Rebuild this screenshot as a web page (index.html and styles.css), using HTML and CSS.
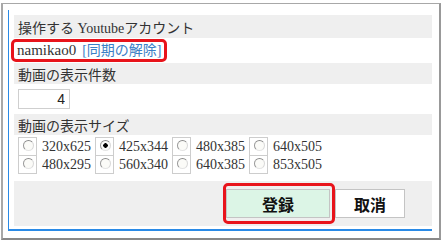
FILE: index.html
```html
<!DOCTYPE html>
<html lang="ja">
<head>
    <meta charset="UTF-8">
    <meta name="viewport" content="width=device-width, initial-scale=1.0">
    <title>Youtube設定</title>
    <link rel="stylesheet" href="styles.css">
</head>
<body>
    <div class="dialog">
        <div class="panel">
            <div class="row head">操作する Youtubeアカウント</div>
            <div class="row account">
                <span class="mark"><span class="user">namikao0</span><a class="link" href="#">[同期の解除]</a></span>
            </div>
            <div class="row head">動画の表示件数</div>
            <div class="row count">
                <input class="num" type="text" value="4">
            </div>
            <div class="row head">動画の表示サイズ</div>
            <div class="row sizes">
                <table class="size-table">
                    <tr>
                        <td class="pick"><input type="radio" name="size"></td>
                        <td class="size">320x625</td>
                        <td class="pick"><input type="radio" name="size" checked></td>
                        <td class="size">425x344</td>
                        <td class="pick"><input type="radio" name="size"></td>
                        <td class="size">480x385</td>
                        <td class="pick"><input type="radio" name="size"></td>
                        <td class="size">640x505</td>
                    </tr>
                    <tr>
                        <td class="pick"><input type="radio" name="size"></td>
                        <td class="size">480x295</td>
                        <td class="pick"><input type="radio" name="size"></td>
                        <td class="size">560x340</td>
                        <td class="pick"><input type="radio" name="size"></td>
                        <td class="size">640x385</td>
                        <td class="pick"><input type="radio" name="size"></td>
                        <td class="size">853x505</td>
                    </tr>
                </table>
            </div>
            <div class="row actions">
                <span class="mark mark-btn"><button class="btn primary">登録</button></span>
                <button class="btn">取消</button>
            </div>
        </div>
    </div>
</body>
</html>
```

FILE: styles.css
```css
body {
    margin: 0;
    background-color: #ffffff;
    font-family: 'Liberation Serif', 'Noto Sans CJK JP', serif;
    font-size: 14px;
    color: #333;
}
.dialog {
    width: 440px;
    height: 237px;
    margin: 3px 0 0 1px;
    border: 1px solid #a8a8a8;
    border-left-width: 2px;
    border-right: 2px solid #999;
    border-bottom: 2px solid #888;
    padding: 6px 7px 0 5px;
    box-sizing: border-box;
}
.panel {
    border-left: 1px solid #2a8ae6;
    border-bottom: 2px solid #2a8ae6;
    padding: 5px 0 3px 5px;
}
.row {
    display: flex;
    align-items: center;
    padding-left: 4px;
}
.head {
    background-color: #efefef;
    height: 21px;
}
.head:first-child {
    height: 23px;
}
.account {
    height: 25px;
}
.mark {
    display: inline-block;
    border: 3px solid #e8141b;
    border-radius: 5px;
    margin-left: -7px;
    padding: 0 3px 0 3px;
    line-height: 16px;
}
.user {
    font-size: 15px;
}
.link {
    color: #3b80c6;
    text-decoration: none;
    margin-left: 6px;
}
.count {
    height: 30px;
}
.num {
    width: 52px;
    height: 20px;
    box-sizing: border-box;
    border: 1px solid #cfcfcf;
    padding: 0 4px;
    text-align: right;
    font-family: 'Liberation Sans', sans-serif;
    font-size: 14px;
    color: #222;
}
.sizes {
    height: 46px;
    align-items: flex-start;
    padding-top: 2px;
    box-sizing: border-box;
}
.size-table {
    border-collapse: collapse;
}
.size-table td {
    height: 17px;
    padding: 0;
}
.pick {
    width: 17px;
    border: 1px solid #cdcdcd;
    vertical-align: top;
}
.size {
    padding: 0 4px 0 5px !important;
    line-height: 17px;
}
.pick input {
    appearance: none;
    width: 11px;
    height: 11px;
    margin: 2px 0 0 4px;
    border-radius: 50%;
    border: 1px solid;
    border-color: #8a8a8a #d8d8d8 #e4e4e4 #9a9a9a;
    background: #fbfbf8;
    display: block;
}
.pick input:checked {
    background: radial-gradient(circle, #000 0, #000 2px, #fbfbf8 2.5px);
}
.actions {
    background-color: #efefef;
    height: 45px;
    justify-content: flex-end;
    padding-right: 27px;
}
.mark-btn {
    margin: 0;
    padding: 3px 2px 3px 0;
    line-height: normal;
}
.btn {
    display: block;
    height: 29px;
    border: 1px solid #c4c4c4;
    background-color: #ffffff;
    font-family: 'Noto Sans CJK JP', sans-serif;
    font-size: 16px;
    font-weight: bold;
    color: #111;
    width: 70px;
    padding: 0;
}
.primary {
    width: 104px;
    background-color: #dcf5e6;
}
```
